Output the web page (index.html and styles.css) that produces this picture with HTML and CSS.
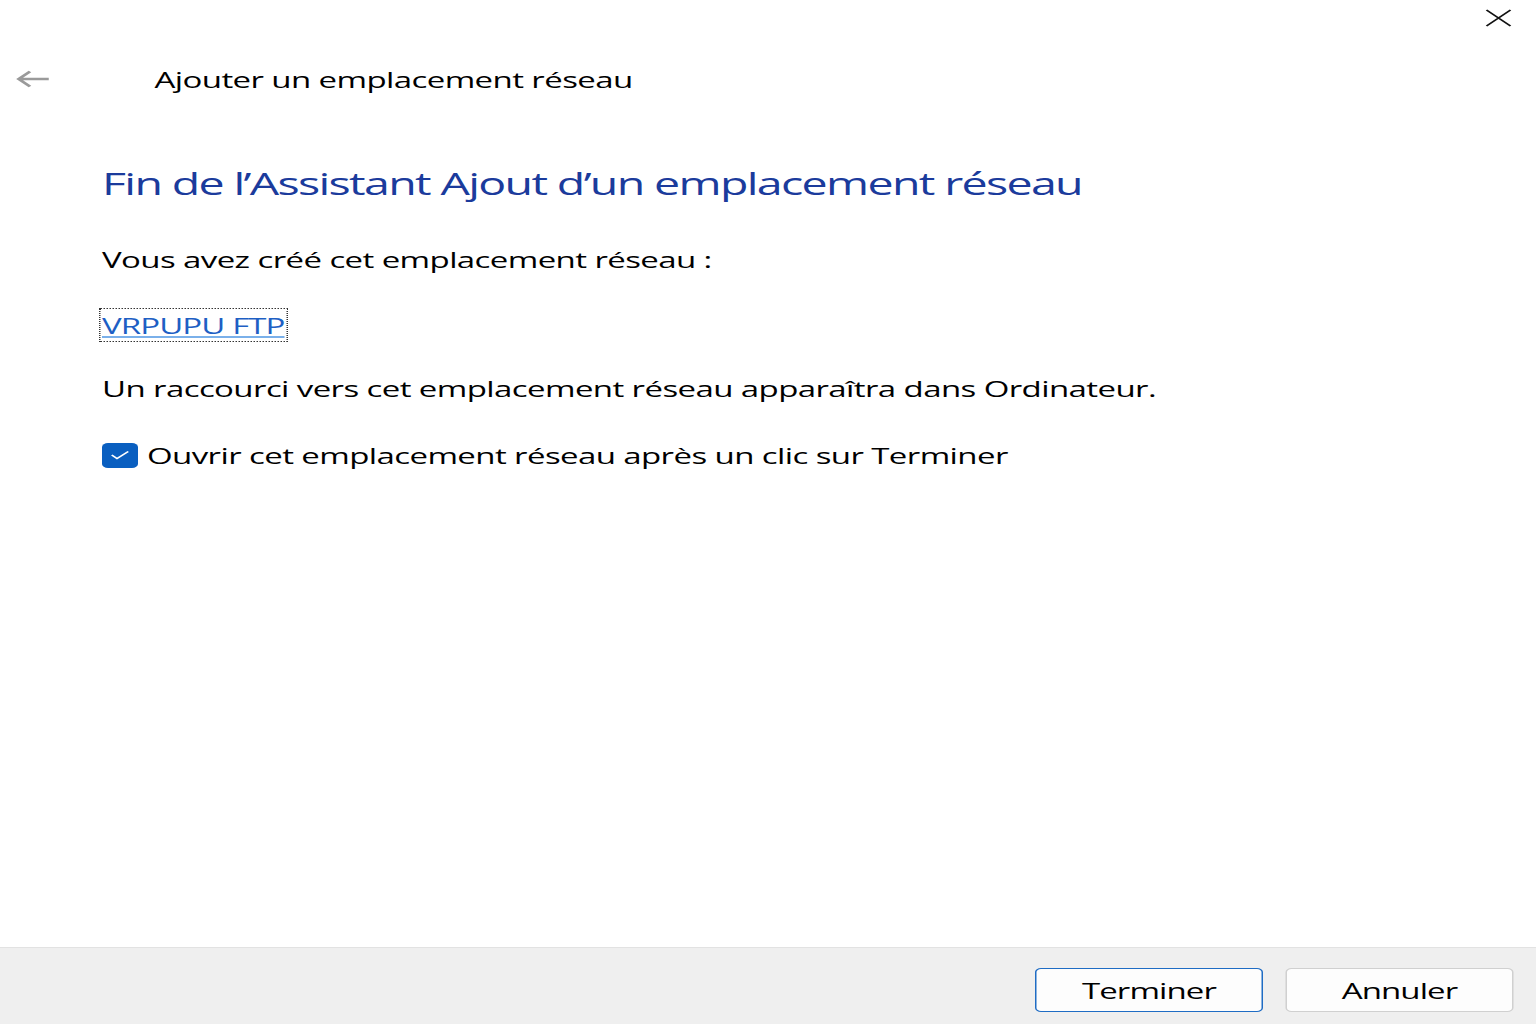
FILE: index.html
```html
<!DOCTYPE html>
<html lang="fr">

<head>
  <meta charset="utf-8">
  <meta name="viewport" content="width=device-width, initial-scale=1">
  <title>Ajouter un emplacement réseau</title>
  <link rel="stylesheet" href="styles.css">
</head>

<body>
  <div class="dialog">
    <div class="title-bar">
      <button class="close-btn" title="Fermer">
        <svg width="20" height="20" viewBox="0 0 20 20">
          <path d="M2 2 L18 18 M18 2 L2 18" stroke="#111" stroke-width="1.4" fill="none" />
        </svg>
      </button>
    </div>

    <div class="nav-bar">
      <button class="back-btn" title="Précédent">
        <svg width="24" height="18" viewBox="0 0 24 18">
          <path d="M22.5 9 H2.5 M10 1.5 L2.5 9 L10 16.5" stroke="#9a9a9a" stroke-width="2.4" fill="none" />
        </svg>
      </button>
      <span class="nav-title">Ajouter un emplacement réseau</span>
    </div>

    <main class="content">
      <h1 class="main-title">Fin de l’Assistant Ajout d’un emplacement réseau</h1>
      <p class="text">Vous avez créé cet emplacement réseau :</p>
      <div class="link-row">
        <a href="#" class="place-link">VRPUPU FTP</a>
      </div>
      <p class="text">Un raccourci vers cet emplacement réseau apparaîtra dans Ordinateur.</p>
      <label class="check-row">
        <span class="check-box">
          <svg width="14" height="10" viewBox="0 0 14 10">
            <path d="M1.5 5 L5 8.5 L12.5 1.5" stroke="#fff" stroke-width="1.3" fill="none" />
          </svg>
        </span>
        <span>Ouvrir cet emplacement réseau après un clic sur Terminer</span>
      </label>
    </main>

    <footer class="footer">
      <button class="btn btn-default">Terminer</button>
      <button class="btn">Annuler</button>
    </footer>
  </div>
</body>

</html>
```

FILE: styles.css
```css
html, body {
  margin: 0;
  padding: 0;
  overflow: hidden;
  background-color: #fff;
}
body {
  font-family: "Open Sans", "Noto Sans", sans-serif;
  color: #000;
}
.dialog {
  width: 1024px;
  height: 1024px;
  display: flex;
  flex-direction: column;
  transform: scaleX(1.5);
  transform-origin: 0 0;
}
button {
  font-family: inherit;
  cursor: pointer;
}
.title-bar {
  height: 38px;
  display: flex;
  justify-content: flex-end;
  align-items: flex-start;
  padding-right: 15px;
}
.close-btn {
  border: none;
  background: none;
  padding: 0;
  margin-top: 8px;
  width: 20px;
  height: 21px;
}
.nav-bar {
  height: 44px;
  margin-top: 19px;
  display: flex;
  align-items: center;
}
.back-btn {
  border: none;
  background: none;
  padding: 0;
  margin-left: 10px;
  width: 24px;
  height: 18px;
  display: flex;
}
.nav-title {
  margin-left: 69px;
  font-size: 22px;
  letter-spacing: -0.4px;
}
.content {
  flex: 1;
  padding: 0 0 0 68px;
}
.main-title {
  margin: 62px 0 0 0;
  font-size: 31px;
  font-weight: normal;
  line-height: 40px;
  letter-spacing: -1.1px;
  color: #1b3b9c;
}
.text {
  margin: 0;
  font-size: 22px;
  line-height: 30px;
  letter-spacing: -0.4px;
}
.content .text:first-of-type {
  margin-top: 41px;
}
.link-row {
  margin: 36px 0 31px 0;
  height: 32px;
}
.place-link {
  display: inline-block;
  font-size: 22px;
  line-height: 30px;
  letter-spacing: -0.6px;
  color: #1e5fc4;
  text-decoration-color: #7ab0ea;
  outline: 1px dotted #333;
  outline-offset: 1px;
}
.check-row {
  display: flex;
  align-items: center;
  margin-top: 37px;
  font-size: 22px;
  line-height: 30px;
  letter-spacing: -0.4px;
}
.check-box {
  width: 24px;
  height: 25px;
  border-radius: 4px;
  background-color: #0a5fc0;
  display: flex;
  align-items: center;
  justify-content: center;
  margin-right: 6px;
}
.footer {
  height: 77px;
  background-color: #efefef;
  border-top: 1px solid #e2e2e2;
  display: flex;
  justify-content: flex-end;
  align-items: flex-start;
  gap: 15px;
  padding: 20px 15px 0 0;
  box-sizing: border-box;
}
.btn {
  width: 152px;
  height: 44px;
  background-color: #fdfdfd;
  border: 1px solid #d0d0d0;
  border-radius: 4px;
  font-size: 22px;
  letter-spacing: -0.6px;
  color: #000;
}
.btn-default {
  border: 1px solid #1f6cc4;
}
```
